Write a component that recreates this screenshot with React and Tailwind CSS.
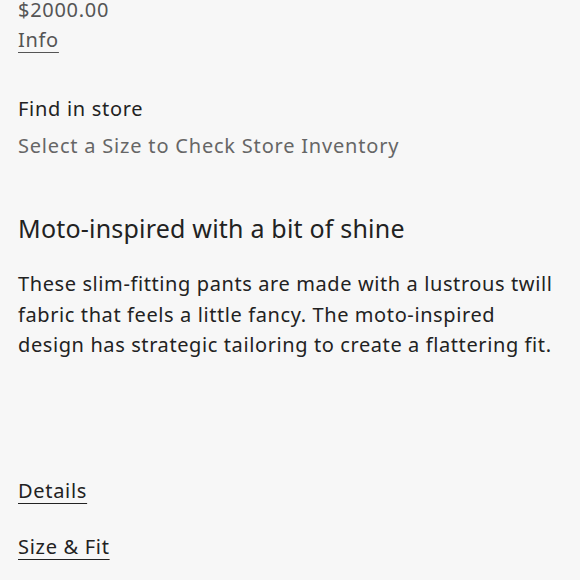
export default function App() {
  return (
    <div className="w-[580px] h-[580px] overflow-hidden bg-[#f7f7f7] text-[#222222]" style={{ fontFamily: '"Noto Sans", sans-serif' }}>
      <div className="pl-[18px] flex flex-col tracking-[0.7px]">
        <div className="-mt-[5px] text-[20px] leading-[30px] text-[#555555]">$2000.00</div>
        <div className="text-[20px] leading-[30px] text-[#555555]"><span className="underline underline-offset-[5px] decoration-1">Info</span></div>
        <div className="mt-[39px] text-[20px] leading-[30px]">Find in store</div>
        <div className="mt-[7px] text-[20px] leading-[30px] text-[#666666] tracking-[0.8px]">Select a Size to Check Store Inventory</div>
        <div className="mt-[50px] text-[25px] leading-[34px] tracking-[0.2px]">Moto-inspired with a bit of shine</div>
        <p className="mt-[24px] text-[20px] leading-[30.5px] tracking-[0.6px] whitespace-nowrap">
          These slim-fitting pants are made with a lustrous twill<br />
          fabric that feels a little fancy. The moto-inspired<br />
          design has strategic tailoring to create a flattering fit.
        </p>
        <div className="mt-[115px] text-[20px] leading-[30px]"><span className="underline underline-offset-[5px] decoration-1">Details</span></div>
        <div className="mt-[26px] text-[20px] leading-[30px]"><span className="underline underline-offset-[5px] decoration-1">Size &amp; Fit</span></div>
      </div>
    </div>
  );
}
